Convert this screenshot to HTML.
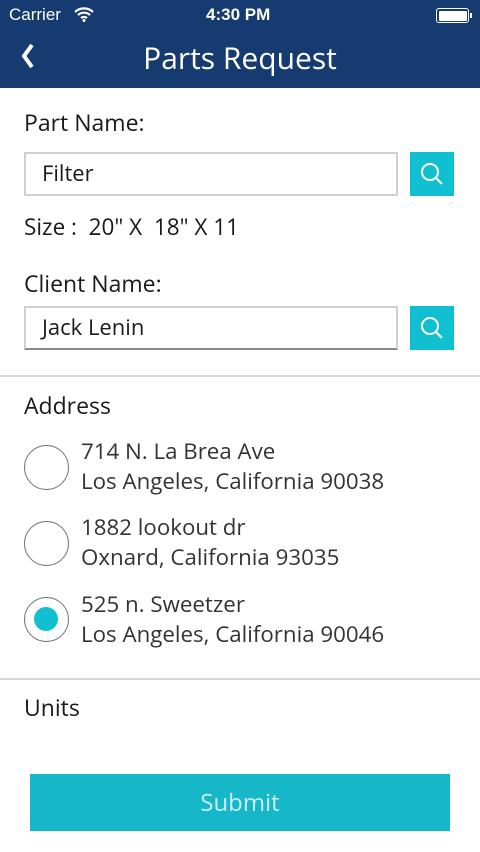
<!DOCTYPE html>
<html><head><style>
*{margin:0;padding:0;box-sizing:border-box}
body{width:480px;height:852px;background:#fff;font-family:"Open Sans","DejaVu Sans","Liberation Sans",sans-serif;color:#1a1a1a;position:relative;overflow:hidden}
.hdr{position:absolute;left:0;top:0;width:480px;height:88px;background:#163b70;color:#fff}
.abs{position:absolute}
.t{font-size:23px;white-space:nowrap}
.inp{position:absolute;left:24px;width:374px;height:44px;border:2px solid #d0d0d0;font-size:22px;padding-left:16px;line-height:39px}
.btn{position:absolute;left:410px;width:44px;height:44px;background:#10c0d0}
.hr{position:absolute;left:0;width:480px;height:2px;background:#d8d8d8}
.rad{position:absolute;left:24px;width:45px;height:45px;border:1.5px solid #777;border-radius:50%}
.ad{left:81px;line-height:30px;font-size:22.3px;color:#333}
</style></head><body>
<div class="hdr">
 <div class="abs" style="left:9px;top:5px;font-size:17px;font-family:'Liberation Sans',sans-serif">Carrier</div>
 <svg class="abs" style="left:73px;top:6px" width="22" height="16" viewBox="0 0 22 16"><path d="M2 6a13 13 0 0 1 18 0M5 9a9 9 0 0 1 12 0M8 12a5 5 0 0 1 6 0" stroke="#fff" stroke-width="2.2" fill="none"/><circle cx="11" cy="14.5" r="1.5" fill="#fff"/></svg>
 <div class="abs" style="left:206px;top:5px;font-size:17px;font-weight:bold;font-family:'Liberation Sans',sans-serif">4:30 PM</div>
 <div class="abs" style="left:436px;top:8px;width:33px;height:15px;border:1.5px solid #fff;border-radius:3px;padding:1.5px"><div style="width:100%;height:100%;background:#fff;border-radius:1px"></div></div>
 <div class="abs" style="left:470px;top:13px;width:2px;height:5px;background:#fff"></div>
 <svg class="abs" style="left:20px;top:43px" width="16" height="26" viewBox="0 0 16 26"><path d="M12 2L4 13l8 11" stroke="#fff" stroke-width="4" fill="none"/></svg>
 <div class="abs" style="left:0;width:480px;top:37px;text-align:center;font-size:30px">Parts Request</div>
</div>
<div class="abs t" style="left:24px;top:106px">Part Name:</div>
<div class="inp" style="top:152px">Filter</div>
<div class="btn" style="top:152px"><svg width="44" height="44"><circle cx="20" cy="20" r="8" stroke="#fff" stroke-width="2" fill="none"/><path d="M26 26l6 6" stroke="#fff" stroke-width="2"/></svg></div>
<div class="abs t" style="left:24px;top:211px;font-size:22.5px">Size :&nbsp; 20" X&nbsp; 18" X 11</div>
<div class="abs t" style="left:24px;top:267px">Client Name:</div>
<div class="inp" style="top:306px;border-bottom-color:#888">Jack Lenin</div>
<div class="btn" style="top:306px"><svg width="44" height="44"><circle cx="20" cy="20" r="8" stroke="#fff" stroke-width="2" fill="none"/><path d="M26 26l6 6" stroke="#fff" stroke-width="2"/></svg></div>
<div class="hr" style="top:375px"></div>
<div class="abs t" style="left:24px;top:389px">Address</div>
<div class="rad" style="top:445px"></div>
<div class="abs t ad" style="top:436px">714 N. La Brea Ave<br>Los Angeles, California 90038</div>
<div class="rad" style="top:521px"></div>
<div class="abs t ad" style="top:512px">1882 lookout dr<br>Oxnard, California 93035</div>
<div class="rad" style="top:597px"><div style="position:absolute;left:9px;top:9px;width:24px;height:24px;border-radius:50%;background:#10c0d0"></div></div>
<div class="abs t ad" style="top:589px">525 n. Sweetzer<br>Los Angeles, California 90046</div>
<div class="hr" style="top:678px"></div>
<div class="abs t" style="left:24px;top:691px">Units</div>
<div class="abs" style="left:30px;top:774px;width:420px;height:57px;background:#17b7ca;color:#c8eef3;font-size:24px;text-align:center;line-height:57px">Submit</div>
</body></html>
